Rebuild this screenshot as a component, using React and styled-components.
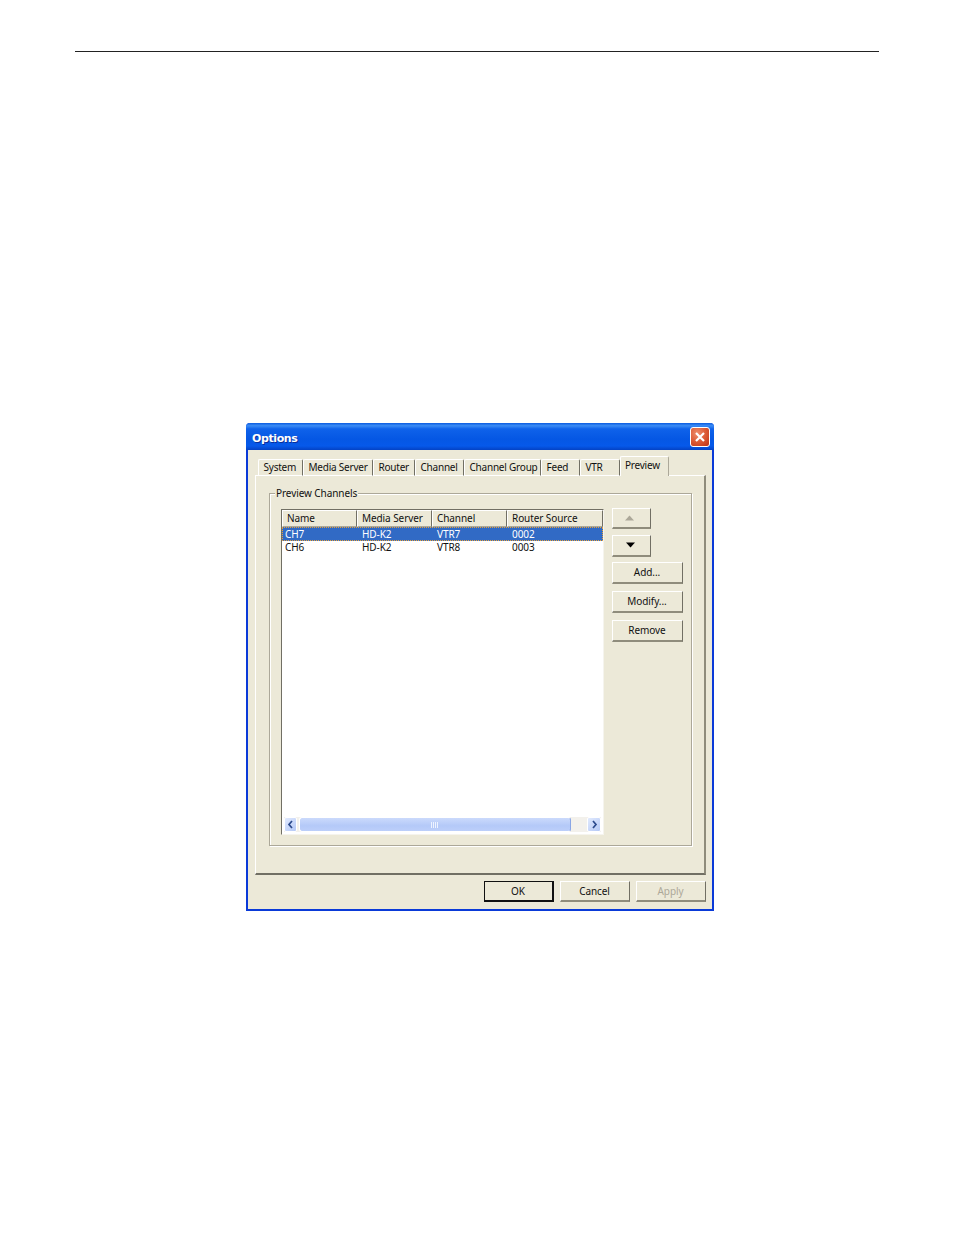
import React from "react";
import styled, { createGlobalStyle } from "styled-components";

const Global = createGlobalStyle`
  html, body { margin: 0; padding: 0; background: #fff; }
  body { font-family: "Noto Sans", "Liberation Sans", sans-serif; }
`;

const Page = styled.div`
  width: 954px;
  height: 1235px;
  padding-top: 51px;
  box-sizing: border-box;
  overflow: hidden;
`;
const Rule = styled.div`
  height: 1px;
  margin: 0 75px;
  background: #222;
`;
const Dialog = styled.div`
  width: 468px;
  height: 488px;
  margin: 371px 0 0 246px;
  box-sizing: border-box;
  display: flex;
  flex-direction: column;
  background: #ece9d8;
  border: 2px solid #0a3ad8;
  border-top: 0;
  border-radius: 4px 4px 0 0;
  font-size: 10px;
  letter-spacing: -0.08px;
  color: #111;
`;
const TitleBar = styled.div`
  height: 27px;
  margin: 0 -2px;
  padding: 0 4px 0 6px;
  flex: none;
  display: flex;
  align-items: center;
  justify-content: space-between;
  border-radius: 4px 4px 0 0;
  background: linear-gradient(180deg, #0a5be0 0%, #3b8cf5 10%, #0f62ea 22%, #0557e4 60%, #0659ea 85%, #0442c4 100%);
`;
const Title = styled.span`
  color: #fff;
  font-family: "DejaVu Sans", sans-serif;
  font-weight: 700;
  font-size: 11px;
  letter-spacing: -0.4px;
  padding-top: 3px;
  text-shadow: 1px 1px 0 #0a2f9a;
`;
const CloseBox = styled.div`
  width: 20px;
  height: 20px;
  box-sizing: border-box;
  border: 1px solid #fff;
  border-radius: 3px;
  background: radial-gradient(circle at 35% 30%, #ee8f6d 0%, #dc5a35 50%, #bd3214 100%);
  display: flex;
  align-items: center;
  justify-content: center;
`;
const TabRow = styled.div`
  height: 20px;
  margin: 6px 0 -1px 7px;
  padding-left: 3px;
  flex: none;
  display: flex;
  align-items: flex-end;
  position: relative;
  z-index: 1;
`;
const Tab = styled.div`
  width: ${(p) => p.$w}px;
  height: ${(p) => (p.$active ? 20 : 17)}px;
  box-sizing: border-box;
  padding: ${(p) => (p.$active ? "2px 0 0 4px" : "1px 0 0 4.5px")};
  line-height: 13px;
  letter-spacing: -0.22px;
  white-space: nowrap;
  background: #ece9d8;
  border-top: 1px solid #fff;
  border-left: 1px solid #fff;
  border-right: 1px solid ${(p) => (p.$active ? "#aca899" : "#716f64")};
  border-radius: 2px 2px 0 0;
  ${(p) => !p.$active && "border-bottom: 1px solid #fff;"}
`;
const Panel = styled.div`
  width: 451px;
  height: 400px;
  margin-left: 7px;
  padding: 17px 0 0 13px;
  box-sizing: border-box;
  flex: none;
  border-top: 1px solid #fff;
  border-left: 1px solid #fff;
  border-right: 2px solid #8f8c7c;
  border-bottom: 2px solid #716f64;
`;
const Group = styled.div`
  position: relative;
  width: 423px;
  height: 353px;
  padding: 15px 0 0 11px;
  box-sizing: border-box;
  display: flex;
  align-items: flex-start;
  border: 1px solid #aca899;
  box-shadow: 1px 1px 0 #fff, inset 1px 1px 0 #fff;
`;
const Legend = styled.span`
  position: absolute;
  top: -7px;
  left: 5px;
  padding: 0 1px;
  line-height: 13px;
  background: #ece9d8;
`;
const ListView = styled.div`
  width: 323px;
  height: 326px;
  box-sizing: border-box;
  flex: none;
  display: flex;
  flex-direction: column;
  background: #fff;
  border-top: 1px solid #716f64;
  border-left: 1px solid #716f64;
  border-right: 1px solid #f5f4ee;
  border-bottom: 1px solid #f5f4ee;
`;
const columns = "75px 75px 75px 96px";
const HeaderRow = styled.div`
  display: grid;
  grid-template-columns: ${columns};
  height: 17px;
  flex: none;
`;
const HeaderCell = styled.div`
  box-sizing: border-box;
  padding: 0 0 0 ${(p) => p.$pad}px;
  line-height: 14px;
  white-space: nowrap;
  background: #ece9d8;
  border-top: 1px solid #fff;
  border-left: 1px solid #fff;
  border-right: 1px solid #716f64;
  border-bottom: 1px solid #aca899;
`;
const Row = styled.div`
  display: grid;
  grid-template-columns: ${columns};
  height: ${(p) => (p.$selected ? 14 : 13)}px;
  box-sizing: border-box;
  line-height: ${(p) => (p.$selected ? 14 : 13)}px;
  flex: none;
  ${(p) =>
    p.$selected
      ? "background: #316ac5; color: #fff; outline: 1px dotted #e8a23c; outline-offset: -1px;"
      : ""}
`;
const Cell = styled.div`
  padding-left: ${(p) => p.$pad}px;
  white-space: nowrap;
`;
const Spacer = styled.div`
  flex: 1;
`;
const ScrollBar = styled.div`
  height: 15px;
  margin: 0 2px 2px 2px;
  flex: none;
  display: flex;
  align-items: stretch;
  background: #f3f1ec;
`;
const ScrollArrow = styled.div`
  width: ${(p) => p.$w}px;
  margin-left: ${(p) => p.$ml || 0}px;
  box-sizing: border-box;
  flex: none;
  display: flex;
  align-items: center;
  justify-content: center;
  border: 1px solid #fff;
  border-radius: 2px;
  background: linear-gradient(135deg, #e1eafe, #b4c8f6);
`;
const ScrollThumb = styled.div`
  width: 272px;
  margin-left: 2px;
  flex: none;
  box-sizing: border-box;
  display: flex;
  align-items: center;
  justify-content: center;
  border: 1px solid #fff;
  border-right-color: #8aa6e6;
  border-radius: 3px;
  background: linear-gradient(180deg, #cbdafc, #b4c9f8 60%, #bccffa);
`;
const Side = styled.div`
  margin-left: 8px;
  display: flex;
  flex-direction: column;
  align-items: flex-start;
  margin-top: -1px;
`;
const Btn = styled.div`
  width: ${(p) => p.$w}px;
  height: ${(p) => p.$h}px;
  margin-top: ${(p) => p.$mt || 0}px;
  padding: 0 ${(p) => p.$pr ?? 1}px 1px 0;
  box-sizing: border-box;
  flex: none;
  display: flex;
  align-items: center;
  justify-content: center;
  background: #ece9d8;
  color: ${(p) => (p.$disabled ? "#aca899" : "#111")};
  border-top: 1px solid #fff;
  border-left: 1px solid #fff;
  border-right: ${(p) => (p.$def ? "2px solid #111" : "1px solid #716f64")};
  border-bottom: ${(p) => (p.$def ? "2px solid #111" : "2px solid #8f8c7c")};
  ${(p) => p.$def && "border-top-color:#111;border-left-color:#111;"}
`;
const Footer = styled.div`
  display: flex;
  justify-content: flex-end;
  gap: 6px;
  padding: 6px 6px 0 0;
`;

const Tri = ({ up, color }) => (
  <svg width="11" height="6" viewBox="0 0 11 6">
    <path d={up ? "M5.5 0.5 L10 5.5 L1 5.5 Z" : "M1 0.5 L10 0.5 L5.5 5.5 Z"} fill={color} />
  </svg>
);
const Chevron = ({ dir }) => (
  <svg width="7" height="9" viewBox="0 0 7 9">
    <path
      d={dir === "left" ? "M5 1 L2 4.5 L5 8" : "M2 1 L5 4.5 L2 8"}
      fill="none"
      stroke="#2c4a8c"
      strokeWidth="1.7"
    />
  </svg>
);

const tabs = [
  ["System", 45],
  ["Media Server", 70],
  ["Router", 42],
  ["Channel", 49],
  ["Channel Group", 77],
  ["Feed", 39],
  ["VTR", 40],
];
const rows = [
  ["CH7", "HD-K2", "VTR7", "0002", true],
  ["CH6", "HD-K2", "VTR8", "0003", false],
];

export default function App() {
  return (
    <Page>
      <Global />
      <Rule />
      <Dialog>
        <TitleBar>
          <Title>Options</Title>
          <CloseBox>
            <svg width="12" height="12" viewBox="0 0 12 12">
              <path d="M2 2 L10 10 M10 2 L2 10" stroke="#fff" strokeWidth="2.2" />
            </svg>
          </CloseBox>
        </TitleBar>
        <TabRow>
          {tabs.map(([t, w]) => (
            <Tab key={t} $w={w}>{t}</Tab>
          ))}
          <Tab $w={49} $active>Preview</Tab>
        </TabRow>
        <Panel>
          <Group>
            <Legend>Preview Channels</Legend>
            <ListView>
              <HeaderRow>
                <HeaderCell $pad={4}>Name</HeaderCell>
                <HeaderCell $pad={4}>Media Server</HeaderCell>
                <HeaderCell $pad={4}>Channel</HeaderCell>
                <HeaderCell $pad={4}>Router Source</HeaderCell>
              </HeaderRow>
              {rows.map((r) => (
                <Row key={r[0]} $selected={r[4]}>
                  <Cell $pad={3}>{r[0]}</Cell>
                  <Cell $pad={5}>{r[1]}</Cell>
                  <Cell $pad={5}>{r[2]}</Cell>
                  <Cell $pad={5}>{r[3]}</Cell>
                </Row>
              ))}
              <Spacer />
              <ScrollBar>
                <ScrollArrow $w={13}><Chevron dir="left" /></ScrollArrow>
                <ScrollThumb>
                  <svg width="8" height="6" viewBox="0 0 8 6">
                    <path d="M0.5 0V6M2.5 0V6M4.5 0V6M6.5 0V6" stroke="#eef3ff" strokeWidth="1" />
                  </svg>
                </ScrollThumb>
                <ScrollArrow $w={14} $ml={16}><Chevron dir="right" /></ScrollArrow>
              </ScrollBar>
            </ListView>
            <Side>
              <Btn $w={39} $h={21} $pr={4}><Tri up color="#aca899" /></Btn>
              <Btn $w={39} $h={22} $mt={6} $pr={2}><Tri color="#000" /></Btn>
              <Btn $w={71} $h={22} $mt={5}>Add...</Btn>
              <Btn $w={71} $h={22} $mt={7}>Modify...</Btn>
              <Btn $w={71} $h={22} $mt={7}>Remove</Btn>
            </Side>
          </Group>
        </Panel>
        <Footer>
          <Btn $w={70} $h={21} $def>OK</Btn>
          <Btn $w={70} $h={21}>Cancel</Btn>
          <Btn $w={70} $h={21} $disabled>Apply</Btn>
        </Footer>
      </Dialog>
    </Page>
  );
}
